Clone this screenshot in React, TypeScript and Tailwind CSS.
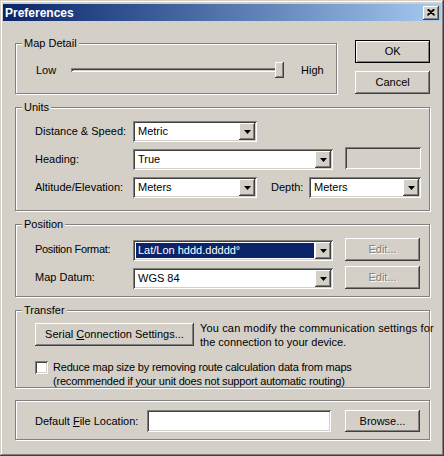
import type { ReactNode } from "react"

// classic 3D edges
const raised =
  "shadow-[inset_-1px_-1px_#404040,inset_1px_1px_#ffffff,inset_-2px_-2px_#808080,inset_2px_2px_#d4d0c8]"
const sunken =
  "shadow-[inset_1px_1px_#808080,inset_-1px_-1px_#ffffff,inset_2px_2px_#404040,inset_-2px_-2px_#d4d0c8]"
const etched = "border border-[#808080] shadow-[inset_1px_1px_#ffffff,1px_1px_#ffffff]"

function Arrow() {
  return (
    <svg width="7" height="4" viewBox="0 0 7 4">
      <polygon points="0,0 7,0 3.5,4" fill="#000" />
    </svg>
  )
}

function Combo({ value, className, selected }: { value: string; className: string; selected?: boolean }) {
  return (
    <div className={`flex h-[21px] shrink-0 bg-white p-[2px] ${sunken} ${className}`}>
      <div className="flex flex-1 items-center py-[1px] pl-[1px] pr-[1px]">
        <span
          className={`flex h-full flex-1 items-center pl-[2px] ${selected ? "bg-[#0a246a] text-white" : ""}`}
        >
          {value}
        </span>
      </div>
      <div className={`flex w-[16px] items-center justify-center bg-[#d4d0c8] ${raised}`}>
        <Arrow />
      </div>
    </div>
  )
}

function Button({
  children,
  className,
  disabled,
  isDefault,
}: {
  children: ReactNode
  className: string
  disabled?: boolean
  isDefault?: boolean
}) {
  const edge = isDefault
    ? "border border-black shadow-[inset_1px_1px_#ffffff,inset_-1px_-1px_#808080]"
    : raised
  return (
    <div
      className={`flex shrink-0 items-center justify-center ${edge} ${className} ${
        disabled ? "text-[#808080] [text-shadow:1px_1px_0_#ffffff]" : ""
      }`}
    >
      {children}
    </div>
  )
}

function Group({ title, className, children }: { title?: string; className: string; children: ReactNode }) {
  return (
    <div className={`relative ${etched} ${className}`}>
      {title && (
        <span className="absolute -top-[8px] left-[6px] bg-[#d4d0c8] px-[2px] leading-[14px]">{title}</span>
      )}
      {children}
    </div>
  )
}

export default function App() {
  return (
    <div className="h-[456px] w-[444px] bg-[#d4d0c8] font-['Liberation_Sans',Arial,sans-serif] text-[11px] text-black">
      <div className="flex h-full flex-col p-[3px] shadow-[inset_-1px_-1px_#404040,inset_1px_1px_#d4d0c8,inset_-2px_-2px_#808080,inset_2px_2px_#ffffff]">
        {/* title bar */}
        <div className="mt-[1px] flex h-[17px] items-center justify-between bg-linear-to-r from-[#0a246a] to-[#a6caf0] pl-[2px] pr-[2px]">
          <span className="text-[12px] font-bold text-white">Preferences</span>
          <div className={`flex h-[14px] w-[16px] items-center justify-center bg-[#d4d0c8] ${raised}`}>
            <svg width="8" height="7" viewBox="0 0 8 7">
              <path d="M0.5 0.5 L7.5 6.5 M1.5 0.5 L7.5 5.7 M7.5 0.5 L0.5 6.5 M6.5 0.5 L0.5 5.7" stroke="#000" strokeWidth="1.2" />
            </svg>
          </div>
        </div>

        <div className="flex flex-col pl-[12px] pr-[11px]">
          {/* Map detail + dialog buttons */}
          <div className="mt-[19px] flex">
            <Group title="Map Detail" className="mt-[3px] h-[51px] w-[323px]">
              <div className="flex h-full items-center pl-[20px] pt-[3px]">
                <span className="w-[35px]">Low</span>
                <div className={`relative h-[4px] w-[213px] ${sunken}`}>
                  <div className={`absolute -top-[6px] right-0 h-[16px] w-[9px] bg-[#d4d0c8] ${raised}`} />
                </div>
                <span className="ml-[17px]">High</span>
              </div>
            </Group>
            <div className="ml-[18px] flex w-[75px] flex-col gap-[8px]">
              <Button isDefault className="h-[23px]">
                OK
              </Button>
              <Button className="h-[23px]">Cancel</Button>
            </div>
          </div>

          {/* Units */}
          <Group title="Units" className="mt-[13px] h-[104px]">
            <div className="flex flex-col gap-[7px] pl-[19px] pt-[13px]">
              <div className="flex items-center">
                <span className="w-[98px]">Distance &amp; Speed:</span>
                <Combo value="Metric" className="w-[124px]" />
              </div>
              <div className="flex items-center">
                <span className="w-[98px]">Heading:</span>
                <Combo value="True" className="w-[200px]" />
                <div className={`ml-[12px] -mt-[3px] h-[22px] w-[76px] ${sunken}`} />
              </div>
              <div className="flex items-center">
                <span className="w-[98px]">Altitude/Elevation:</span>
                <Combo value="Meters" className="w-[124px]" />
                <span className="ml-[14px] w-[38px]">Depth:</span>
                <Combo value="Meters" className="w-[112px]" />
              </div>
            </div>
          </Group>

          {/* Position */}
          <Group title="Position" className="mt-[13px] h-[73px]">
            <div className="flex flex-col gap-[5px] pl-[19px] pt-[13px]">
              <div className="flex items-end">
                <span className="mb-[4px] w-[98px] tracking-[-0.3px]">Position Format:</span>
                <Combo value="Lat/Lon hddd.ddddd°" className="w-[200px]" selected />
                <Button disabled className="ml-[12px] h-[23px] w-[75px]">
                  Edit...
                </Button>
              </div>
              <div className="flex items-end">
                <span className="mb-[4px] w-[98px]">Map Datum:</span>
                <Combo value="WGS 84" className="w-[200px]" />
                <Button disabled className="ml-[12px] h-[23px] w-[75px]">
                  Edit...
                </Button>
              </div>
            </div>
          </Group>

          {/* Transfer */}
          <Group title="Transfer" className="mt-[13px] h-[78px]">
            <div className="flex flex-col pl-[19px] pt-[12px]">
              <div className="flex items-start">
                <Button className="h-[23px] w-[159px]">
                  <span>
                    Serial <u>C</u>onnection Settings...
                  </span>
                </Button>
                <p className="-mt-[2px] ml-[6px] whitespace-nowrap leading-[14px]">
                  <span className="tracking-[0.15px]">You can modify the communication settings for</span>
                  <br />
                  the connection to your device.
                </p>
              </div>
              <div className="mt-[11px] flex items-start">
                <div className={`mt-[1px] h-[13px] w-[13px] shrink-0 bg-white ${sunken}`} />
                <p className="ml-[5px] whitespace-nowrap leading-[14px] tracking-[-0.2px]">
                  Reduce map size by removing route calculation data from maps
                  <br />
                  (recommended if your unit does not support automatic routing)
                </p>
              </div>
            </div>
          </Group>

          {/* Default file location */}
          <Group className="mt-[12px] h-[40px]">
            <div className="flex items-center pl-[19px] pt-[9px]">
              <span className="w-[112px]">
                Default <u>F</u>ile Location:
              </span>
              <div className={`h-[22px] w-[184px] bg-white ${sunken}`} />
              <Button className="ml-[14px] h-[22px] w-[75px]">Browse...</Button>
            </div>
          </Group>
        </div>
      </div>
    </div>
  )
}
